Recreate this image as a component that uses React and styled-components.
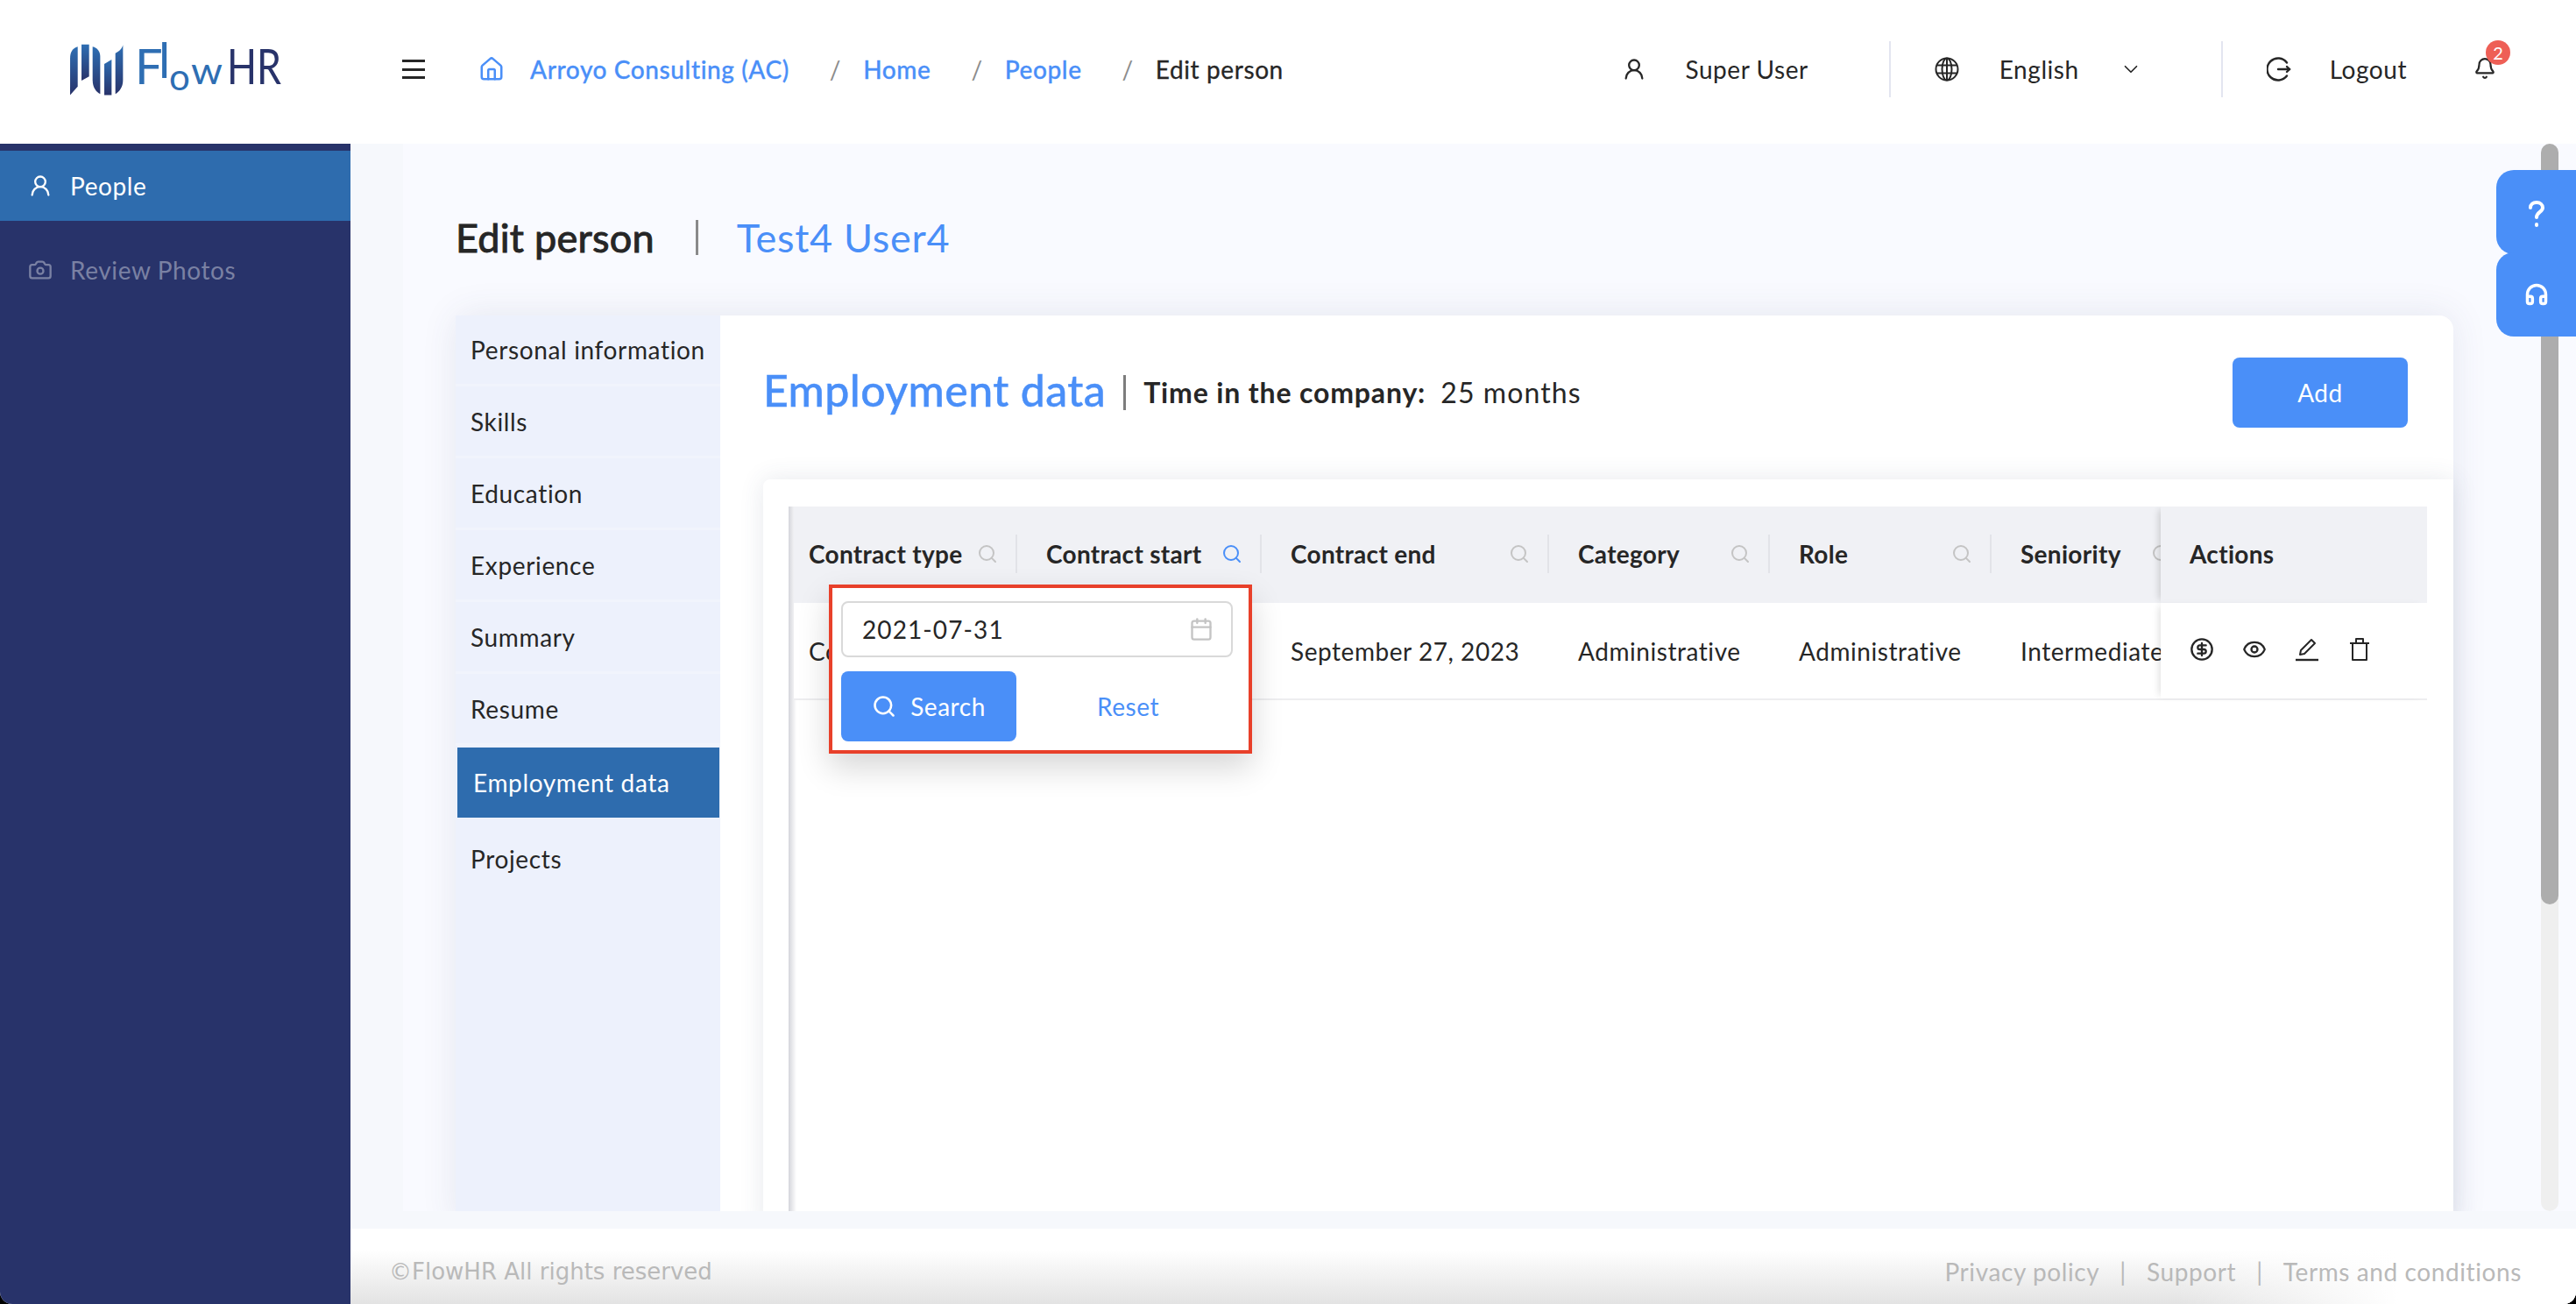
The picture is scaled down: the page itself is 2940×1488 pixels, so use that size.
import React from 'react'
import styled, { createGlobalStyle } from 'styled-components'
import { House, UserRound, ChevronDown, Bell, Search, Eye, Camera, Headphones, CircleDollarSign, Calendar } from 'lucide-react'

const blue = '#4a8ff8'
const navy = '#28336a'
const steel = '#2e6cae'
const ink = '#262626'

const Global = createGlobalStyle`
  html, body { margin: 0; padding: 0; background: #000; }
  body { font-family: Lato, "Open Sans", sans-serif; color: ${ink}; }
  * { box-sizing: border-box; }
`

const Page = styled.div`
  position: relative;
  width: 2940px;
  height: 1488px;
  overflow: hidden;
  background: #fff;
  display: grid;
  grid-template-columns: 400px 1fr;
  grid-template-rows: 164px 1fr;
  border-radius: 0 0 14px 14px;
`

const Header = styled.header`
  grid-column: 1 / 3;
  display: flex;
  align-items: center;
  background: #fff;
  padding: 0 91px 6px 78px;
`

const Logo = styled.svg`
  width: 246px;
  height: 62px;
  flex: none;
`

const MenuButton = styled.div`
  margin-left: 135px;
  width: 26px;
  height: 22px;
  flex: none;
  display: flex;
  flex-direction: column;
  justify-content: space-between;
  span { height: 3px; background: ${ink}; display: block; }
`

const Crumbs = styled.nav`
  margin-left: 61px;
  display: flex;
  align-items: center;
  font-size: 28px;
  letter-spacing: 0.6px;
`

const CrumbLink = styled.span`
  color: ${blue};
  font-weight: 500;
  -webkit-text-stroke: 0.3px ${blue};
  margin-left: ${p => p.$ml || 0}px;
`

const CrumbSlash = styled.span`
  color: #8c8c8c;
  margin: 0 25px 0 46px;
`

const CrumbNow = styled.span`
  color: ${ink};
  -webkit-text-stroke: 0.3px ${ink};
`

const HeaderRight = styled.div`
  margin-left: auto;
  display: flex;
  align-items: center;
  font-size: 28px;
  letter-spacing: 0.55px;
  color: ${ink};
`

const HeaderItem = styled.div`
  display: flex;
  align-items: center;
  gap: ${p => p.$gap || 44}px;
`

const VLine = styled.div`
  width: 2px;
  height: 64px;
  background: #e3e5f0;
  margin: 0 50px 0 ${p => p.$l || 92}px;
`

const BellBox = styled.div`
  position: relative;
  margin-left: 76px;
  height: 28px;
  display: flex;
`

const Badge = styled.span`
  position: absolute;
  top: -19px;
  right: -16px;
  width: 28px;
  height: 28px;
  border-radius: 50%;
  background: #ee5f56;
  color: #fff;
  font-size: 20px;
  letter-spacing: 0;
  display: flex;
  align-items: center;
  justify-content: center;
`

const Sidebar = styled.aside`
  background: ${navy};
  padding-top: 8px;
`

const SideItem = styled.div`
  height: 80px;
  display: flex;
  align-items: center;
  gap: 20px;
  padding-left: 32px;
  font-size: 28px;
  letter-spacing: 0.6px;
  background: ${p => (p.$active ? steel : 'transparent')};
  color: ${p => (p.$active ? '#fff' : '#7a81a3')};
  margin-bottom: 16px;
`

const Main = styled.main`
  position: relative;
  display: flex;
  flex-direction: column;
  min-height: 0;
  background: #f6f8fc;
`

const Scroll = styled.div`
  height: 1218px;
  margin-left: 60px;
  padding-left: 60px;
  background: #f9faff;
  overflow: hidden;
`

const TitleRow = styled.div`
  height: 196px;
  padding-top: 18px;
  display: flex;
  align-items: center;
`

const Title = styled.h1`
  margin: 0;
  font-size: 45px;
  font-weight: 400;
  color: ${ink};
  -webkit-text-stroke: 1px ${ink};
  letter-spacing: 0.25px;
`

const TitleBar = styled.span`
  width: 3px;
  height: 40px;
  background: #8a8a8a;
  margin: 0 44px 0 47px;
`

const TitleName = styled.span`
  font-size: 45px;
  color: ${blue};
  letter-spacing: 0.7px;
`

const CardWrap = styled.section`
  width: 2280px;
  height: 1040px;
  display: flex;
  background: #fff;
  border-radius: 16px 16px 0 0;
  box-shadow: 0 -2px 40px rgba(60, 70, 110, 0.1);
`

const Tabs = styled.div`
  width: 302px;
  flex: none;
  background: #edf1fc;
  border-radius: 12px 0 0 0;
`

const Tab = styled.div`
  height: 78px;
  margin-bottom: 4px;
  display: flex;
  align-items: center;
  padding-left: 17px;
  font-size: 28px;
  letter-spacing: 0.65px;
  white-space: nowrap;
  background: #edf1fc;
  color: ${ink};
  box-shadow: 0 3px 0 #f1f4fc;
`

const ActiveTab = styled(Tab)`
  height: 80px;
  margin: 5px 1px 8px 2px;
  padding-left: 18px;
  background: ${steel};
  color: #fff;
  box-shadow: none;
`

const LastTab = styled(Tab)`
  box-shadow: none;
`

const Panel = styled.div`
  flex: 1;
  min-width: 0;
  padding: 0 0 0 49px;
`

const PanelHead = styled.div`
  height: 187px;
  display: flex;
  align-items: center;
  padding: 0 52px 12px 0;
`

const PanelTitle = styled.h2`
  margin: -6px 0 0;
  font-size: 50px;
  font-weight: 500;
  color: ${blue};
  -webkit-text-stroke: 0.4px ${blue};
  letter-spacing: 0.4px;
`

const PanelBar = styled.span`
  width: 3px;
  height: 40px;
  background: #7d7d7d;
  margin: 0 20px 0 20px;
`

const Tenure = styled.span`
  font-size: 32px;
  font-weight: 700;
  letter-spacing: 0.85px;
`

const TenureValue = styled.span`
  font-size: 32px;
  margin-left: 17px;
  letter-spacing: 1.1px;
`

const AddButton = styled.button`
  margin-left: auto;
  width: 200px;
  height: 80px;
  border: 0;
  border-radius: 8px;
  background: ${blue};
  color: #fff;
  font: inherit;
  font-size: 28px;
  letter-spacing: 0.55px;
`

const TableCard = styled.div`
  position: relative;
  height: 860px;
  padding: 31px 30px 0 29px;
  background: #fff;
  border-radius: 8px 0 0 0;
  box-shadow: 0 0 28px rgba(60, 70, 110, 0.12);
`

const TableBox = styled.div`
  position: relative;
  height: 100%;
  overflow: hidden;
  padding-left: 6px;
  background: linear-gradient(to right, #d4d5db, #fff 9px);
`

const Columns = styled.div`
  display: grid;
  grid-template-columns: 255px 279px 328px 252px 253px 193px 304px;
  width: 1864px;
`

const HeadRow = styled(Columns)`
  height: 110px;
  background: #f0f1f5;
`

const BodyRow = styled(Columns)`
  height: 111px;
  background: #fff;
  border-bottom: 2px solid #eeeef0;
`

const HeadCell = styled.div`
  position: relative;
  display: flex;
  align-items: center;
  justify-content: space-between;
  padding: 0 22px 2px ${p => p.$pl || 33}px;
  font-size: 28px;
  font-weight: 700;
  letter-spacing: 0.3px;
  white-space: nowrap;
  overflow: hidden;
  svg { flex: none; margin-right: ${p => p.$iconShift || 0}px; }
  &::after {
    content: '';
    display: ${p => (p.$noline ? 'none' : 'block')};
    position: absolute;
    right: 0;
    top: 32px;
    height: 44px;
    width: 2px;
    background: #e2e3e8;
  }
`

const BodyCell = styled.div`
  display: flex;
  align-items: center;
  padding-left: ${p => p.$pl || 33}px;
  font-size: 28px;
  letter-spacing: 0.55px;
  white-space: nowrap;
  overflow: hidden;
`

const StickyHead = styled(HeadCell)`
  background: #f0f1f5;
  justify-content: flex-start;
  box-shadow: -6px 0 8px -4px rgba(0, 0, 0, 0.16);
  z-index: 1;
`

const StickyBody = styled(BodyCell)`
  background: #fff;
  gap: 32px;
  padding-bottom: 4px;
  box-shadow: -6px 0 8px -4px rgba(0, 0, 0, 0.12);
  z-index: 1;
`

const Popover = styled.div`
  position: absolute;
  left: 75px;
  top: 120px;
  width: 483px;
  height: 193px;
  padding: 15px 18px 15px 10px;
  background: #fff;
  border: 4px solid #e8402a;
  box-shadow: 0 16px 34px rgba(0, 0, 0, 0.16);
  z-index: 2;
`

const DateField = styled.div`
  height: 64px;
  display: flex;
  align-items: center;
  justify-content: space-between;
  padding: 0 20px 0 22px;
  border: 2px solid #d9d9d9;
  border-radius: 8px;
  font-size: 28px;
  letter-spacing: 1.1px;
`

const PopActions = styled.div`
  margin-top: 16px;
  display: flex;
  align-items: center;
`

const SearchButton = styled.button`
  width: 200px;
  height: 80px;
  border: 0;
  border-radius: 8px;
  background: ${blue};
  color: #fff;
  font: inherit;
  font-size: 28px;
  letter-spacing: 0.55px;
  display: flex;
  align-items: center;
  justify-content: center;
  gap: 16px;
`

const ResetLink = styled.span`
  margin-left: 92px;
  color: ${blue};
  font-size: 28px;
  letter-spacing: 0.55px;
`

const Track = styled.div`
  position: absolute;
  right: 20px;
  top: 0;
  width: 20px;
  height: 1218px;
  border-radius: 10px;
  background: #efefef;
`

const Thumb = styled.div`
  width: 20px;
  height: 868px;
  border-radius: 10px;
  background: #adadad;
`

const FloatButton = styled.div`
  position: absolute;
  right: 0;
  top: ${p => p.$top}px;
  width: 91px;
  height: 96px;
  padding-top: ${p => p.$pt || 0}px;
  background: ${blue};
  color: #fff;
  border-radius: 20px 0 0 20px;
  display: flex;
  align-items: center;
  justify-content: center;
  z-index: 3;
`

const Footer = styled.footer`
  margin-top: 20px;
  height: 86px;
  padding: 12px 62px 0 44px;
  display: flex;
  align-items: center;
  justify-content: space-between;
  color: #b9b9b9;
  background:
    linear-gradient(to right, rgba(255, 255, 255, 0) 82%, #fff 92%),
    linear-gradient(to top, #e3e3e3, #fff 72%);
`

const Copyright = styled.span`
  font-family: "DejaVu Sans", sans-serif;
  font-size: 26px;
`

const FooterLinks = styled.div`
  display: flex;
  gap: 23px;
  font-size: 28px;
  letter-spacing: 0.6px;
`

function QuestionIcon() {
  return (
    <svg width="28" height="32" viewBox="0 0 28 32" fill="none" stroke="currentColor" strokeWidth="4" strokeLinecap="round">
      <path d="M7 9c0-4 3-6 7-6s7 2.500 7 6c0 5-7 5-7 11" />
      <path d="M14 28v1" />
    </svg>
  )
}

function LogoutIcon() {
  return (
    <svg width="28" height="28" viewBox="0 0 28 28" fill="none" stroke={ink} strokeWidth="2.4" strokeLinecap="round">
      <path d="M23 6.500A12.500 12.500 0 1 0 23 21.500" />
      <path d="M13 14h13" />
      <path d="M23 11l3 3-3 3" />
    </svg>
  )
}

function GlobeIcon() {
  return (
    <svg width="28" height="28" viewBox="0 0 28 28" fill="none" stroke={ink} strokeWidth="2">
      <circle cx="14" cy="14" r="12.500" />
      <ellipse cx="14" cy="14" rx="5.500" ry="12.500" />
      <path d="M14 1.500v25M2.500 9.500h23M2.500 18.500h23" />
    </svg>
  )
}

function EditIcon() {
  return (
    <svg width="28" height="28" viewBox="0 0 28 28" fill="none" stroke={ink} strokeWidth="2">
      <path d="M6 20l1-5L19 3l4 4L11 19z" strokeLinejoin="round" />
      <path d="M1 26h26" strokeWidth="2.400" />
    </svg>
  )
}

function TrashIcon() {
  return (
    <svg width="28" height="28" viewBox="0 0 28 28" fill="none" stroke={ink} strokeWidth="2">
      <path d="M3 7h22M10 7V2h8v5M6 7v19h16V7" strokeLinejoin="round" />
    </svg>
  )
}

const tabs = ['Personal information', 'Skills', 'Education', 'Experience', 'Summary', 'Resume']
const columns = ['Contract type', 'Contract start', 'Contract end', 'Category', 'Role', 'Seniority']
const cells = ['Contractor', 'July 31, 2021', 'September 27, 2023', 'Administrative', 'Administrative', 'Intermediate']

export default function App() {
  return (
    <>
      <Global />
      <Page>
        <Header>
          <Logo viewBox="0 0 246 62">
            <defs>
              <linearGradient id="bars" x1="0" y1="0" x2="0" y2="1">
                <stop offset="0" stopColor="#2e6eb3" />
                <stop offset="1" stopColor="#28336a" />
              </linearGradient>
            </defs>
            <g fill="url(#bars)" transform="translate(-38.300 -26.700) scale(.3333)">
              <path d="M147 96C130 100 121 115 121 135V262L147 232Z" />
              <path d="M160 88H186V198L160 212Z" />
              <path d="M198 96C214 100 224 112 224 130V258C210 252 198 235 198 210Z" />
              <path d="M238 155L263 140V262H238Z" />
              <path d="M276 118C290 112 300 100 302 90V210C302 235 290 250 276 258Z" />
            </g>
            <g fontFamily="Lato, sans-serif" fill="#2e6eb3">
              <text x="76" y="48" fontSize="56">F</text>
              <text x="103" y="41" fontSize="56">l</text>
              <text x="115" y="55" fontSize="42">o</text>
              <text x="140" y="48" fontSize="42" textLength="36" lengthAdjust="spacingAndGlyphs">w</text>
              <text x="181" y="48" fontSize="56" fill={navy} textLength="62" lengthAdjust="spacingAndGlyphs">HR</text>
            </g>
          </Logo>
          <MenuButton><span /><span /><span /></MenuButton>
          <Crumbs>
            <House size={30} color={blue} strokeWidth={2} />
            <CrumbLink $ml={29}>Arroyo Consulting (AC)</CrumbLink>
            <CrumbSlash>/</CrumbSlash>
            <CrumbLink>Home</CrumbLink>
            <CrumbSlash>/</CrumbSlash>
            <CrumbLink>People</CrumbLink>
            <CrumbSlash>/</CrumbSlash>
            <CrumbNow>Edit person</CrumbNow>
          </Crumbs>
          <HeaderRight>
            <HeaderItem>
              <UserRound size={28} strokeWidth={2} />
              <span>Super User</span>
            </HeaderItem>
            <VLine />
            <HeaderItem $gap={46}>
              <GlobeIcon />
              <span>English</span>
              <ChevronDown size={26} strokeWidth={1.6} />
            </HeaderItem>
            <VLine $l={90} />
            <HeaderItem>
              <LogoutIcon />
              <span>Logout</span>
            </HeaderItem>
            <BellBox>
              <Bell size={26} strokeWidth={2} />
              <Badge>2</Badge>
            </BellBox>
          </HeaderRight>
        </Header>
        <Sidebar>
          <SideItem $active>
            <UserRound size={28} strokeWidth={2} />
            People
          </SideItem>
          <SideItem>
            <Camera size={28} strokeWidth={2} />
            Review Photos
          </SideItem>
        </Sidebar>
        <Main>
          <Scroll>
            <TitleRow>
              <Title>Edit person</Title>
              <TitleBar />
              <TitleName>Test4 User4</TitleName>
            </TitleRow>
            <CardWrap>
              <Tabs>
                {tabs.map(t => <Tab key={t}>{t}</Tab>)}
                <ActiveTab>Employment data</ActiveTab>
                <LastTab>Projects</LastTab>
              </Tabs>
              <Panel>
                <PanelHead>
                  <PanelTitle>Employment data</PanelTitle>
                  <PanelBar />
                  <Tenure>Time in the company:</Tenure>
                  <TenureValue>25 months</TenureValue>
                  <AddButton>Add</AddButton>
                </PanelHead>
                <TableCard>
                  <TableBox>
                    <HeadRow>
                      {columns.map((c, i) => (
                        <HeadCell key={c} $pl={i === 0 ? 17 : 33} $noline={i === 5} $iconShift={i === 5 ? -35 : 0}>
                          {c}
                          <Search size={24} color={i === 1 ? blue : '#c4c4c4'} strokeWidth={2} />
                        </HeadCell>
                      ))}
                      <StickyHead $noline>Actions</StickyHead>
                    </HeadRow>
                    <BodyRow>
                      {cells.map((c, i) => (
                        <BodyCell key={c} $pl={i === 0 ? 17 : 33}>{c}</BodyCell>
                      ))}
                      <StickyBody>
                        <CircleDollarSign size={28} strokeWidth={2} />
                        <Eye size={28} strokeWidth={2} />
                        <EditIcon />
                        <TrashIcon />
                      </StickyBody>
                    </BodyRow>
                  </TableBox>
                  <Popover>
                    <DateField>
                      2021-07-31
                      <Calendar size={28} color="#c4c4c4" strokeWidth={2} />
                    </DateField>
                    <PopActions>
                      <SearchButton>
                        <Search size={28} strokeWidth={2.2} />
                        Search
                      </SearchButton>
                      <ResetLink>Reset</ResetLink>
                    </PopActions>
                  </Popover>
                </TableCard>
              </Panel>
            </CardWrap>
          </Scroll>
          <Track><Thumb /></Track>
          <FloatButton $top={30} $pt={4}><QuestionIcon /></FloatButton>
          <FloatButton $top={124}><Headphones size={28} strokeWidth={3} /></FloatButton>
          <Footer>
            <Copyright>©FlowHR All rights reserved</Copyright>
            <FooterLinks>
              <span>Privacy policy</span>
              <span>|</span>
              <span>Support</span>
              <span>|</span>
              <span>Terms and conditions</span>
            </FooterLinks>
          </Footer>
        </Main>
      </Page>
    </>
  )
}
